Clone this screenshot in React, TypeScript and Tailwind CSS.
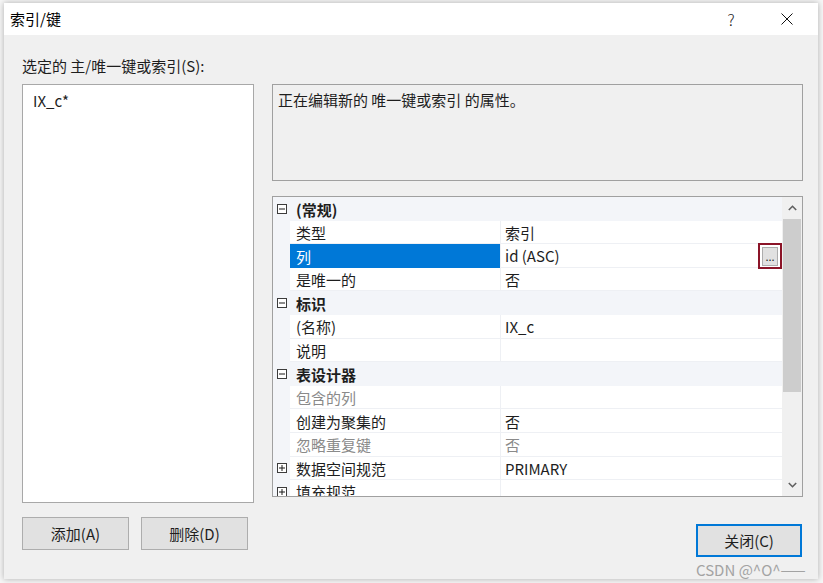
import React from "react";

type Row = {
  kind: "cat" | "prop";
  name: string;
  value?: string;
  exp?: "minus" | "plus";
  selected?: boolean;
  button?: boolean;
  grayName?: boolean;
  grayValue?: boolean;
};

const rows: Row[] = [
  { kind: "cat", name: "(常规)", exp: "minus" },
  { kind: "prop", name: "类型", value: "索引" },
  { kind: "prop", name: "列", value: "id (ASC)", selected: true, button: true },
  { kind: "prop", name: "是唯一的", value: "否" },
  { kind: "cat", name: "标识", exp: "minus" },
  { kind: "prop", name: "(名称)", value: "IX_c" },
  { kind: "prop", name: "说明", value: "" },
  { kind: "cat", name: "表设计器", exp: "minus" },
  { kind: "prop", name: "包含的列", value: "", grayName: true },
  { kind: "prop", name: "创建为聚集的", value: "否" },
  { kind: "prop", name: "忽略重复键", value: "否", grayName: true, grayValue: true },
  { kind: "prop", name: "数据空间规范", value: "PRIMARY", exp: "plus" },
  { kind: "prop", name: "填充规范", value: "", exp: "plus" },
];

function Expander({ type }: { type: "minus" | "plus" }) {
  return (
    <svg width="10" height="10" viewBox="0 0 10 10" className="block">
      <rect x="0.5" y="0.5" width="9" height="9" fill="#ffffff" stroke="#3c3c3c" />
      <line x1="2" y1="5" x2="8" y2="5" stroke="#1a1a1a" />
      {type === "plus" && <line x1="5" y1="2" x2="5" y2="8" stroke="#1a1a1a" />}
    </svg>
  );
}

function GridRow({ r }: { r: Row }) {
  if (r.kind === "cat") {
    return (
      <div className="flex h-[23.6px] shrink-0 items-center bg-[#f3f5f9]">
        <div className="flex w-[17px] shrink-0 items-center justify-center pl-[1px]">
          {r.exp && <Expander type={r.exp} />}
        </div>
        <div className="pl-[6px] pt-[2px] font-bold text-[#1e1e1e]">{r.name}</div>
      </div>
    );
  }
  return (
    <div className="relative flex h-[23.6px] shrink-0">
      <div className="flex w-[17px] shrink-0 items-center justify-center bg-[#f3f5f9] pl-[1px]">
        {r.exp && <Expander type={r.exp} />}
      </div>
      <div
        className={
          r.selected
            ? "flex w-[210px] shrink-0 items-center bg-[#0078d7] pl-[6px] pt-[2px] text-white"
            : "flex w-[210px] shrink-0 items-center border-b border-[#eef0f4] pl-[6px] pt-[2px] " +
              (r.grayName ? "text-[#8a8a8a]" : "text-[#1e1e1e]")
        }
      >
        {r.name}
      </div>
      <div
        className={
          "flex flex-1 items-center border-b border-l border-[#eef0f4] pl-[4px] pt-[2px] " +
          (r.grayValue ? "text-[#8a8a8a]" : "text-[#1e1e1e]")
        }
      >
        {r.value}
      </div>
      {r.button && (
        <div className="absolute right-0 top-[-1px] flex h-[26px] w-[24px] items-center justify-center border-2 border-[#8b1428]">
          <div className="flex h-[19px] w-[16px] items-end justify-center border border-[#adadad] bg-[#e1e1e1] pb-[3px] text-[11px] leading-none text-[#1e1e1e]">
            ...
          </div>
        </div>
      )}
    </div>
  );
}

export default function App() {
  return (
    <div className="h-[583px] w-[823px] overflow-hidden bg-[#f6f6f6] pl-[4px] pt-[3px] font-['Noto_Sans_CJK_SC','Microsoft_YaHei',sans-serif] text-[15px] leading-[18px] text-[#1e1e1e]">
      <div className="flex h-[576px] w-[814px] flex-col shadow-[0_0_6px_rgba(0,0,0,0.3)]">
        {/* Title bar */}
        <div className="flex h-[32px] shrink-0 items-center bg-white">
          <div className="pl-[6px] text-[15px] text-black">索引/键</div>
          <div className="ml-auto flex h-full items-center pr-[3px]">
            <div className="flex h-full w-[56px] items-center justify-center text-[16px] font-light text-[#222]">?</div>
            <div className="flex h-full w-[56px] items-center justify-center">
              <svg width="12" height="12" viewBox="0 0 12 12">
                <line x1="0.5" y1="0.5" x2="11.5" y2="11.5" stroke="#111" strokeWidth="1" />
                <line x1="11.5" y1="0.5" x2="0.5" y2="11.5" stroke="#111" strokeWidth="1" />
              </svg>
            </div>
          </div>
        </div>

        {/* Body */}
        <div className="flex flex-1 flex-col bg-[#f0f0f0] px-[18px] pt-[22px]">
          <div className="h-[18px]">选定的 主/唯一键或索引(S):</div>
          <div className="mt-[9px] flex">
            {/* Left column */}
            <div className="flex w-[232px] shrink-0 flex-col">
              <div className="h-[419px] border border-[#a8a8a8] bg-white pl-[10px] pt-[7px]">IX_c*</div>
              <div className="mt-[14px] flex gap-[12px]">
                <div className="flex h-[33px] w-[107px] items-center justify-center border border-[#adadad] bg-[#e1e1e1]">添加(A)</div>
                <div className="flex h-[33px] w-[107px] items-center justify-center border border-[#adadad] bg-[#e1e1e1]">删除(D)</div>
              </div>
            </div>

            {/* Right column */}
            <div className="ml-[18px] flex w-[531px] shrink-0 flex-col">
              <div className="h-[97px] border border-[#a0a0a0] bg-[#f0f0f0] pl-[5px] pt-[6px]">
                正在编辑新的 唯一键或索引 的属性。
              </div>
              <div className="mt-[15px] flex h-[301px] border border-[#a0a0a0] bg-white">
                <div className="flex flex-1 flex-col overflow-hidden">
                  {rows.map((r, i) => (
                    <GridRow key={i} r={r} />
                  ))}
                </div>
                <div className="flex w-[20px] shrink-0 flex-col bg-[#f0f0f0]">
                  <div className="flex h-[22px] items-center justify-center">
                    <svg width="9" height="6" viewBox="0 0 9 6">
                      <polyline points="0.8,5 4.5,1.3 8.2,5" fill="none" stroke="#606060" strokeWidth="1.6" />
                    </svg>
                  </div>
                  <div className="mx-[1px] h-[173px] bg-[#cdcdcd]" />
                  <div className="flex-1" />
                  <div className="flex h-[22px] items-center justify-center">
                    <svg width="9" height="6" viewBox="0 0 9 6">
                      <polyline points="0.8,1 4.5,4.7 8.2,1" fill="none" stroke="#606060" strokeWidth="1.6" />
                    </svg>
                  </div>
                </div>
              </div>
              <div className="mr-[1px] mt-[27px] flex w-[106px] flex-col self-end">
                <div className="flex h-[33px] items-center justify-center border-2 border-[#0078d7] bg-[#e1e1e1]">关闭(C)</div>
                <div className="mt-[5px] whitespace-nowrap text-[15px] leading-[16px] text-[#a3a3a3]">CSDN @^O^——</div>
              </div>
            </div>
          </div>
        </div>
      </div>
    </div>
  );
}
